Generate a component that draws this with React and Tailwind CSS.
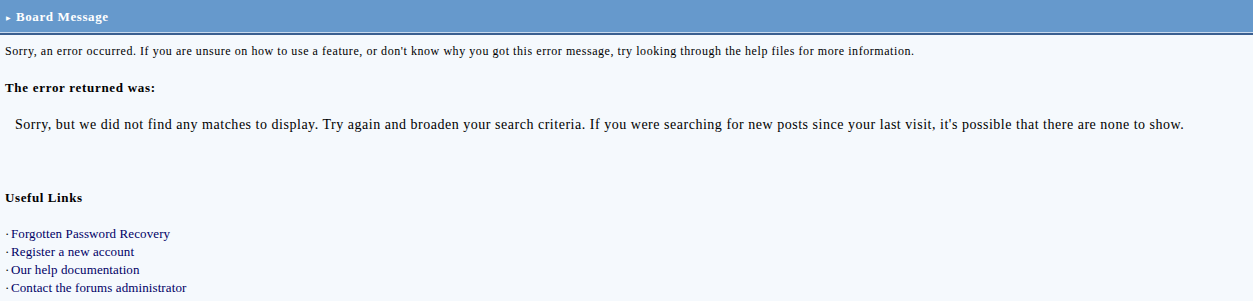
export default function App() {
    const links = [
        'Forgotten Password Recovery',
        'Register a new account',
        'Our help documentation',
        'Contact the forums administrator',
    ];

    return (
        <div className="w-[1253px] h-[301px] overflow-hidden bg-[#f5f9fd] font-['Liberation_Serif',serif] text-black">
            {/* Title bar */}
            <div className="h-[32px] bg-[#6699cc] flex items-center pl-[6px] pt-[2px]">
                <span className="text-white text-[6px] mr-[5px] mt-[2px]">&#9654;</span>
                <span className="text-white font-bold text-[13px] tracking-[0.6px]">Board Message</span>
            </div>
            <div className="h-px bg-[#c9dbef]"></div>
            <div className="h-[2px] bg-[#3a5f90]"></div>

            <div className="px-[5px]">
                <p className="text-[12px] leading-[14px] mt-[9px] tracking-[0.56px]">
                    Sorry, an error occurred. If you are unsure on how to use a feature, or don't know why you got this error message, try looking through the help files for more information.
                </p>

                <p className="font-bold text-[13px] leading-[16px] mt-[22px] tracking-[0.7px]">The error returned was:</p>

                <p className="text-[14px] leading-[18px] mt-[20px] pl-[10px] tracking-[0.52px]">
                    Sorry, but we did not find any matches to display. Try again and broaden your search criteria. If you were searching for new posts since your last visit, it's possible that there are none to show.
                </p>

                <p className="font-bold text-[13px] leading-[16px] mt-[56px] tracking-[0.6px]">Useful Links</p>

                <ul className="mt-[19px] text-[13px] leading-[18px]">
                    {links.map((l) => (
                        <li key={l} className="flex">
                            <span className="text-black w-[6px]">&middot;</span>
                            <a href="#" className="text-[#000066] tracking-[0.1px]">{l}</a>
                        </li>
                    ))}
                </ul>
            </div>
        </div>
    );
}
